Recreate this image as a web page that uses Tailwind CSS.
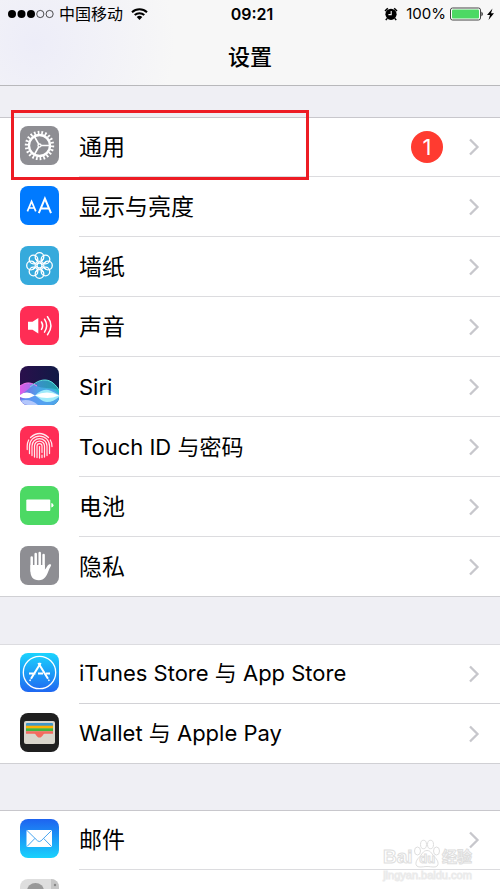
<!DOCTYPE html>
<html lang="zh-CN">
<head>
<meta charset="utf-8">
<meta name="viewport" content="width=device-width, initial-scale=1">
<title>设置</title>
<script src="https://cdn.jsdelivr.net/npm/@tailwindcss/browser@4"></script>
</head>
<body class="relative h-screen overflow-hidden bg-[#efeff4] font-['Inter','Noto_Sans_CJK_SC',sans-serif] text-black">
<svg class="absolute size-0" aria-hidden="true">
  <defs>
    <symbol id="chevron" viewBox="0 0 12 18"><path d="M2 1.500 9.500 9 2 16.500" fill="none" stroke="#c7c7cc" stroke-width="2.300"/></symbol>
    <linearGradient id="store" x1="0" y1="0" x2="0" y2="1"><stop offset="0" stop-color="#1bd3fd"/><stop offset="1" stop-color="#1f67f1"/></linearGradient>
    <linearGradient id="mail" x1="0" y1="0" x2="0" y2="1"><stop offset="0" stop-color="#1e63f0"/><stop offset="1" stop-color="#19d2fd"/></linearGradient>
    <linearGradient id="night" x1="0" y1="0" x2="1" y2="0"><stop offset="0" stop-color="#2a0f4c"/><stop offset="1" stop-color="#101a45"/></linearGradient>
    <linearGradient id="waveA" x1="0" y1="0" x2="1" y2="0"><stop offset="0" stop-color="#e05be6"/><stop offset=".5" stop-color="#7a7ff0"/><stop offset="1" stop-color="#3b9be8"/></linearGradient>
    <linearGradient id="waveB" x1="0" y1="0" x2="1" y2="0"><stop offset="0" stop-color="#6a62e6"/><stop offset=".5" stop-color="#3fb0e6"/><stop offset="1" stop-color="#25c3c0"/></linearGradient>
  </defs>
</svg>

<header class="flex h-[86px] flex-col border-b border-[#b8b8bb] bg-[#f7f7f7] bg-radial-[circle_at_7%_50%] from-[#ededf8] to-[#f7f7f7] to-30%">
  <div class="grid h-7 grid-cols-3 items-center pr-1 pl-2 text-base">
    <div class="flex items-center">
      <svg class="h-3 w-[46px]" viewBox="0 0 46 12" role="img" aria-label="信号"><g><circle cx="4" cy="6" r="4"/><circle cx="13.500" cy="6" r="4"/><circle cx="23" cy="6" r="4"/></g><g fill="none" stroke="#222" stroke-width=".8"><circle cx="32.300" cy="6" r="3.600"/><circle cx="41.600" cy="6" r="3.600"/></g></svg>
      <span class="ml-[5px] whitespace-nowrap">中国移动</span>
      <svg class="ml-2 h-3 w-[17px]" viewBox="0 0 17 12" role="img" aria-label="无线网络"><g fill="none" stroke="#000" stroke-width="2"><path d="M1 4.300a10.800 10.800 0 0 1 15 0"/><path d="M3.700 7.100a7 7 0 0 1 9.600 0"/></g><path d="M5.700 9.100a4 4 0 0 1 5.600 0L8.500 12z"/></svg>
    </div>
    <time class="text-center font-semibold">09:21</time>
    <div class="flex items-center justify-end">
      <svg class="mr-2 h-[14px] w-[14px]" viewBox="0 0 14 14" role="img" aria-label="闹钟"><circle cx="7" cy="7.300" r="5.600"/><path d="M3.800 1.200 1 4M10.200 1.200 13 4" stroke="#000" stroke-width="1.500"/><path d="m3 11.500-1.200 1.700M11 11.500l1.200 1.700" stroke="#000" stroke-width="1.400"/><path d="M7.200 4v3.600H4.400" fill="none" stroke="#f7f7f7" stroke-width="1.100"/></svg>
      <span class="text-[15px]">100%</span>
      <svg class="ml-1 h-[14px] w-[46px]" viewBox="0 0 46 14" role="img" aria-label="正在充电"><rect x=".5" y="1" width="30" height="12" rx="2" fill="#fff" stroke="#444"/><rect x="2" y="2.500" width="27" height="9" rx="1" fill="#4cd964"/><path d="M31.500 4.500q2.500 2.500 0 5z"/><path d="M42.500 1.500 37 8h3l-1.500 5L44 6.200h-3z"/></svg>
    </div>
  </div>
  <h1 class="flex flex-1 items-center justify-center pt-0.5 text-[22px] font-medium">设置</h1>
</header>

<main>
  <ul class="mt-[31px] bg-white text-[23px] shadow-[inset_0_1px_0_#c8c7cc]">
    <li><a href="#general" class="flex h-[60px] pl-5">
      <svg class="mt-[9px] size-[39px] shrink-0" viewBox="0 0 39 39" aria-hidden="true"><rect width="39" height="39" rx="8" fill="#8e8e93"/><g fill="none" stroke="#fff"><circle cx="19.500" cy="19.500" r="13" stroke-width="3.400" pathLength="66" stroke-dasharray="1.400 1.600"/><circle cx="19.500" cy="19.500" r="10.500" stroke-width="2.300"/><path d="M21 19.500h9M18.700 18.200l-4.500-8M18.700 20.800l-4.500 8" stroke-width="1.700"/><circle cx="19.500" cy="19.500" r="1.500" stroke-width="1.300"/></g></svg>
      <span class="ml-5 flex flex-1 items-center border-b border-[#dcdcdf] pr-5"><span class="flex-1 pt-0.5">通用</span><span class="mr-[25px] grid size-8 place-items-center rounded-full bg-[#ff3b30] text-[22px] text-white">1</span><svg class="h-[18px] w-3"><use href="#chevron"/></svg></span></a></li>
    <li><a href="#display" class="flex h-[60px] pl-5">
      <svg class="mt-[9px] size-[39px] shrink-0" viewBox="0 0 39 39" aria-hidden="true"><rect width="39" height="39" rx="8" fill="#007aff"/><g fill="none" stroke="#fff"><path d="M7.400 25.300 11.600 15.400l4.200 9.900M8.900 22h5.400" stroke-width="1.700"/><path d="m18.800 27.200 6.100-14.700L31 27.200M21 22.500h7.800" stroke-width="2"/></g></svg>
      <span class="ml-5 flex flex-1 items-center border-b border-[#dcdcdf] pr-5"><span class="flex-1 pt-0.5">显示与亮度</span><svg class="h-[18px] w-3"><use href="#chevron"/></svg></span></a></li>
    <li><a href="#wallpaper" class="flex h-[60px] pl-5">
      <svg class="mt-[9px] size-[39px] shrink-0" viewBox="0 0 39 39" aria-hidden="true"><rect width="39" height="39" rx="8" fill="#36aadc"/><g fill="none" stroke="#fff" stroke-width="1.300"><circle cx="19.500" cy="11" r="4.300"/><circle cx="25.500" cy="13.500" r="4.300"/><circle cx="28" cy="19.500" r="4.300"/><circle cx="25.500" cy="25.500" r="4.300"/><circle cx="19.500" cy="28" r="4.300"/><circle cx="13.500" cy="25.500" r="4.300"/><circle cx="11" cy="19.500" r="4.300"/><circle cx="13.500" cy="13.500" r="4.300"/><circle cx="19.500" cy="19.500" r="2.500"/><path d="M15.500 12.500 18.500 17M23.500 12.500 20.500 17M15.500 26.500l3-4.500M23.500 26.500l-3-4.500M12.500 15.500 17 18.500M12.500 23.500l4.500-3M26.500 15.500 22 18.500M26.500 23.500l-4.500-3"/></g></svg>
      <span class="ml-5 flex flex-1 items-center border-b border-[#dcdcdf] pr-5"><span class="flex-1 pt-0.5">墙纸</span><svg class="h-[18px] w-3"><use href="#chevron"/></svg></span></a></li>
    <li><a href="#sounds" class="flex h-[60px] pl-5">
      <svg class="mt-[9px] size-[39px] shrink-0" viewBox="0 0 39 39" aria-hidden="true"><rect width="39" height="39" rx="8" fill="#ff2d55"/><path d="M8 15.800h4.500L18.300 12v15.500l-5.800-3.800H8z" fill="#fff"/><g fill="none" stroke="#fff" stroke-width="1.500" stroke-linecap="round"><path d="M21.500 16q2.200 3.700 0 7.400"/><path d="M24.500 13.200q4.200 6.500 0 13"/><path d="M27.500 10.700q6.800 9 0 18"/></g></svg>
      <span class="ml-5 flex flex-1 items-center border-b border-[#dcdcdf] pr-5"><span class="flex-1 pt-0.5">声音</span><svg class="h-[18px] w-3"><use href="#chevron"/></svg></span></a></li>
    <li><a href="#siri" class="flex h-[60px] pl-5">
      <svg class="mt-[9px] size-[39px] shrink-0 rounded-lg" viewBox="0 0 39 39" aria-hidden="true"><rect width="39" height="39" fill="url(#night)"/><path d="M0 20C7 15 12 17 17 20S31 21 39 24v15H0z" fill="url(#waveA)"/><path d="M0 29C10 24 15 14 25 14c7 0 11 5 14 10v15H0z" fill="url(#waveB)" opacity=".8"/><path d="M0 33c11-1 20-10 28-10 5 0 8 2 11 5v11H0z" fill="#5b9cf5" opacity=".7"/><g fill="none" stroke-width="1"><path d="M0 20C7 15 12 17 17 20" stroke="#ff7af3"/><path d="M10 21c5-4 9-7 15-7s11 5 14 10" stroke="#5de6e2"/></g><path d="M15 29.500C21 24 26 23 30 24.500c4 1.500 6 3 9 4.500v2c-4 3-7 5-12 5-5-.500-8-4-12-6.500" fill="#a8f3fb" opacity=".9"/><path d="M0 29q7-5 15 .5Q7 34 0 31zM15 29.500q12-6 24 0-12 5-24 0" fill="#fff"/><path d="M0 35q10-3 18 4H0z" fill="#c8d5ff" opacity=".8"/></svg>
      <span class="ml-5 flex flex-1 items-center border-b border-[#dcdcdf] pr-5"><span class="flex-1 pt-0.5 text-[22px]">Siri</span><svg class="h-[18px] w-3"><use href="#chevron"/></svg></span></a></li>
    <li><a href="#touch-id" class="flex h-[60px] pl-5">
      <svg class="mt-[9px] size-[39px] shrink-0" viewBox="0 0 39 39" aria-hidden="true"><rect width="39" height="39" rx="8" fill="#ff2d55"/><g fill="none" stroke="#ffe9ee" stroke-width="1.250" stroke-linecap="round"><path d="M10.500 11.500q9-8 18 0"/><path d="M7.200 23.500V20a12.400 12.400 0 0 1 1.500-6M30.300 14q1.700 2.500 1.700 6.500"/><path d="M9.500 27.500V20a10 10 0 0 1 20 0v7.500"/><path d="M12 29.500V20a7.500 7.500 0 0 1 15 0v9.500"/><path d="M14.500 31V20a5 5 0 0 1 10 0v11"/><path d="M17 31.500V20a2.500 2.500 0 0 1 5 0v6.500M22 29v2.500"/><path d="M19.500 20.500v11.500"/></g></svg>
      <span class="ml-5 flex flex-1 items-center border-b border-[#dcdcdf] pr-5"><span class="flex-1 pt-0.5 text-[22px]">Touch ID 与密码</span><svg class="h-[18px] w-3"><use href="#chevron"/></svg></span></a></li>
    <li><a href="#battery" class="flex h-[60px] pl-5">
      <svg class="mt-[9px] size-[39px] shrink-0" viewBox="0 0 39 39" aria-hidden="true"><rect width="39" height="39" rx="8" fill="#4cd964"/><rect x="6.300" y="13.500" width="24" height="11.500" rx="1" fill="#fff"/><path d="M31.300 17q2.200.3 2.200 2.200t-2.200 2.200z" fill="#fff"/></svg>
      <span class="ml-5 flex flex-1 items-center border-b border-[#dcdcdf] pr-5"><span class="flex-1 pt-0.5">电池</span><svg class="h-[18px] w-3"><use href="#chevron"/></svg></span></a></li>
    <li><a href="#privacy" class="flex h-[60px] border-b border-[#d0d0d4] pl-5">
      <svg class="mt-[9px] size-[39px] shrink-0" viewBox="0 0 39 39" aria-hidden="true"><rect width="39" height="39" rx="8" fill="#8e8e93"/><g fill="none" stroke="#fff" stroke-width="2.500" stroke-linecap="round"><path d="M11.700 11.500V25M15.700 8V21M19.700 7v14M23.600 9v13"/></g><path d="M10.450 19h14.400v4.500c1.500-.8 2.300-4 4-5 .8-.6 2.300-.4 2.300.4 0 1-1.300 2.300-2.300 5.100-2 5.500-4.300 10.300-10 10.300-6 0-8.400-4-8.400-9z" fill="#fff"/></svg>
      <span class="ml-5 flex flex-1 items-center pr-5"><span class="flex-1 pt-0.5">隐私</span><svg class="h-[18px] w-3"><use href="#chevron"/></svg></span></a></li>
  </ul>

  <ul class="mt-[47px] bg-white text-[22px] shadow-[inset_0_1px_0_#dcdce0]">
    <li><a href="#store-settings" class="flex h-[60px] pl-5">
      <svg class="mt-[9px] size-[39px] shrink-0" viewBox="0 0 39 39" aria-hidden="true"><rect width="39" height="39" rx="8" fill="url(#store)"/><g fill="none" stroke="#fff"><circle cx="19.500" cy="19.500" r="16.200" stroke-width="1.300"/><path d="M20.700 10 11 25.800M18.300 10 28 25.800M9 20.500h6.500M18 20.500h5M26 20.500h4" stroke-width="2"/><path d="m10.500 26.500-.7 1.500M28.500 26.500l.7 1.500" stroke-width="1.500"/></g></svg>
      <span class="ml-5 flex flex-1 items-center border-b border-[#d2d2d6] pr-5"><span class="flex-1">iTunes Store 与 App Store</span><svg class="h-[18px] w-3"><use href="#chevron"/></svg></span></a></li>
    <li><a href="#wallet" class="flex h-[60px] border-b border-[#d0d0d4] pl-5">
      <svg class="mt-[9px] size-[39px] shrink-0" viewBox="0 0 39 39" aria-hidden="true"><rect width="39" height="39" rx="8" fill="#1f1f1f"/><rect x="4" y="8" width="31" height="23" rx="2" fill="#d9d6cc"/><rect x="6" y="10" width="27" height="4" rx="1" fill="#3f97c9"/><path d="M6 12.700h27v3H6z" fill="#ffb000"/><path d="M6 15.300h27v3H6z" fill="#40b640"/><path d="M6 18.200h27v2.500h-8.500c-1.500 0-2 3.800-5 3.800s-3.500-3.800-5-3.800H6z" fill="#f46b5f"/></svg>
      <span class="ml-5 flex flex-1 items-center pr-5"><span class="flex-1">Wallet 与 Apple Pay</span><svg class="h-[18px] w-3"><use href="#chevron"/></svg></span></a></li>
  </ul>

  <ul class="mt-[46px] bg-white text-[23px] shadow-[inset_0_1px_0_#c8c7cc]">
    <li><a href="#mail-settings" class="flex h-[60px] pl-5">
      <svg class="mt-[9px] size-[39px] shrink-0" viewBox="0 0 39 39" aria-hidden="true"><rect width="39" height="39" rx="8" fill="url(#mail)"/><rect x="6.500" y="11" width="25.500" height="17" rx="1" fill="#fff"/><path d="m7 11.500 10.500 10.300q1.800 1.500 3.600 0L31.500 11.500M7 27.500l8-8.200M31.500 27.500l-8-8.200" fill="none" stroke="#4aa6f0" stroke-width="1"/></svg>
      <span class="ml-5 flex flex-1 items-center border-b border-[#dcdcdf] pr-5"><span class="flex-1 pt-0.5">邮件</span><svg class="h-[18px] w-3"><use href="#chevron"/></svg></span></a></li>
    <li><a href="#contacts" aria-label="通讯录" class="flex h-[60px] pl-5">
      <svg class="mt-[9px] size-[39px] shrink-0 rounded-lg" viewBox="0 0 39 39" aria-hidden="true"><rect width="39" height="39" fill="#dedede"/><ellipse cx="15.500" cy="12" rx="8.500" ry="8" fill="#999"/><path d="M31 0h8v39h-8z" fill="#c6c6c6"/><circle cx="35" cy="6" r="1.200" fill="#888"/></svg></a></li>
  </ul>
</main>

<div class="pointer-events-none absolute right-7 bottom-2 w-[89px] font-['Liberation_Sans','Noto_Sans_CJK_SC',sans-serif] text-white" aria-hidden="true">
  <div class="flex h-8 items-end justify-between font-bold whitespace-nowrap">
    <span class="text-[19px] leading-6 [-webkit-text-stroke:1px_#dedede]">Bai</span>
    <span class="relative flex h-8 w-[26px] shrink-0 items-end justify-center"><svg class="absolute inset-0 h-8 w-[26px]" viewBox="1 0 26 32" fill="#fff" stroke="#dedede"><ellipse cx="4.500" cy="14" rx="3" ry="4"/><ellipse cx="10.500" cy="7.500" rx="3" ry="4.200"/><ellipse cx="17.500" cy="7.500" rx="3" ry="4.200"/><ellipse cx="23.500" cy="14" rx="3" ry="4"/><path d="M14 13.500c4 0 5 4 8 7 3.500 3 5 9.500-1 9.500-3 0-4-.5-7-.5s-4 .5-7 .5c-6 0-4.500-6.500-1-9.500 3-3 4-7 8-7z"/></svg><span class="relative text-[13px] leading-5 [-webkit-text-stroke:1px_#dedede]">du</span></span>
    <span class="text-[15px] leading-6 [-webkit-text-stroke:1px_#dedede]">经验</span>
  </div>
  <div class="text-center text-[11px] leading-3 [-webkit-text-stroke:1px_#ebebeb]">jingyan.baidu.com</div>
</div>

<div class="pointer-events-none absolute top-[110px] left-[11px] h-[70px] w-[298px] border-3 border-[#ed1c24]" aria-hidden="true"></div>
</body>
</html>
